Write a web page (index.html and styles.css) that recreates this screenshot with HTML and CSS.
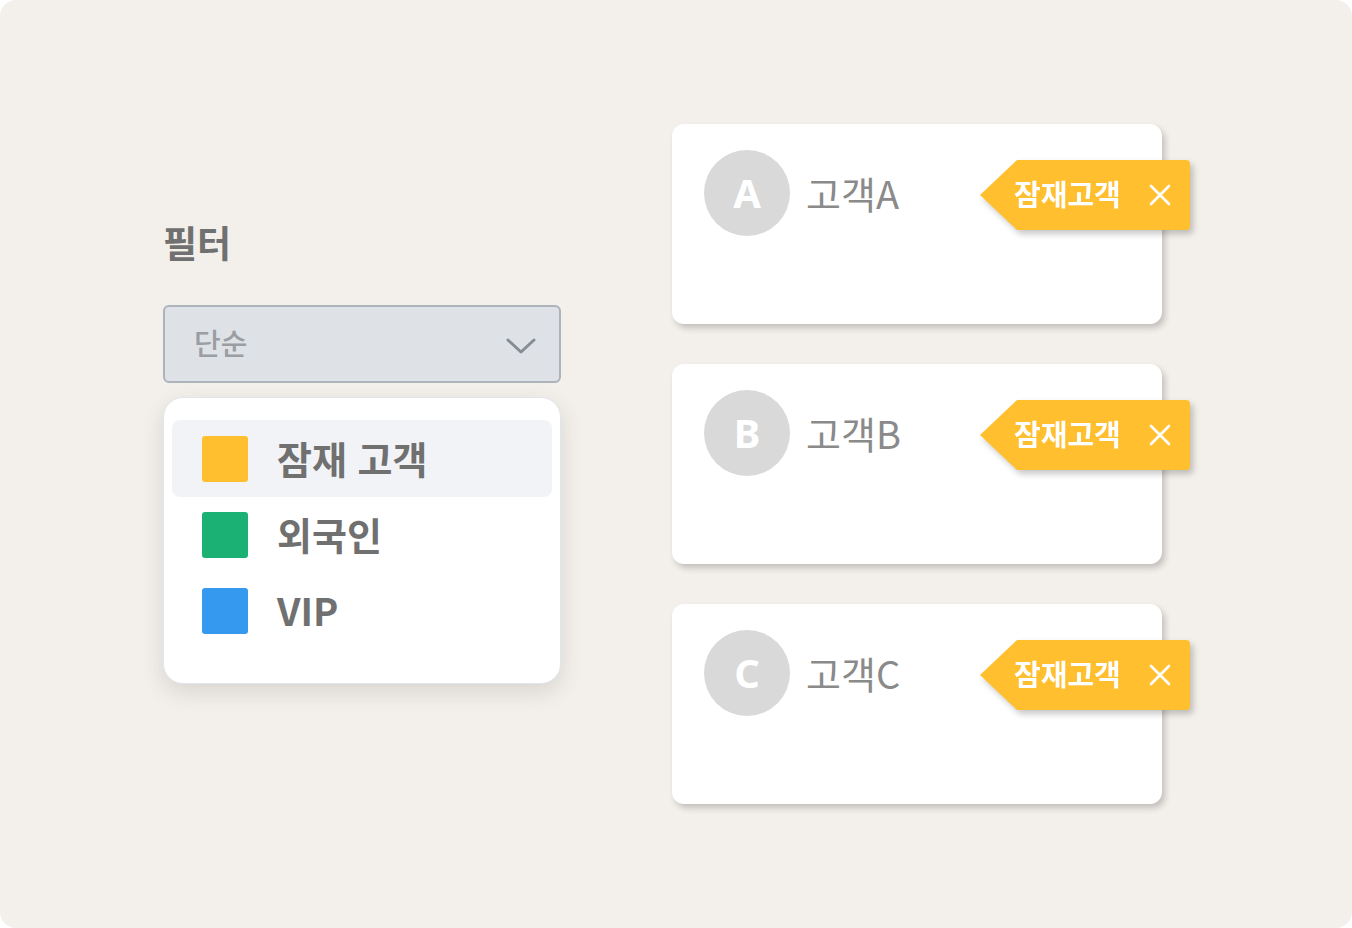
FILE: index.html
```html
<!DOCTYPE html>
<html lang="ko">
<head>
<meta charset="utf-8">
<title>필터</title>
<link rel="stylesheet" href="styles.css">
</head>
<body>
<div class="frame">
  <section class="filter">
    <h1 class="filter-title">필터</h1>
    <div class="select">
      <span class="select-value">단순</span>
      <svg class="chevron" width="30" height="18" viewBox="0 0 30 18"><path d="M2 3 L15 15 L28 3" fill="none" stroke="#858c93" stroke-width="3" stroke-linecap="round" stroke-linejoin="round"/></svg>
    </div>
    <ul class="menu">
      <li class="menu-item active"><span class="swatch yellow"></span><span class="menu-label">잠재 고객</span></li>
      <li class="menu-item"><span class="swatch green"></span><span class="menu-label">외국인</span></li>
      <li class="menu-item"><span class="swatch blue"></span><span class="menu-label">VIP</span></li>
    </ul>
  </section>
  <section class="cards">
    <div class="card">
      <div class="avatar">A</div>
      <div class="name">고객A</div>
      <div class="tag"><div class="tag-body"><span class="tag-text">잠재고객</span><svg class="tag-x" width="22" height="22" viewBox="0 0 22 22"><path d="M2 2 L20 20 M20 2 L2 20" stroke="#fff" stroke-width="2.6" stroke-linecap="round"/></svg></div></div>
    </div>
    <div class="card">
      <div class="avatar">B</div>
      <div class="name">고객B</div>
      <div class="tag"><div class="tag-body"><span class="tag-text">잠재고객</span><svg class="tag-x" width="22" height="22" viewBox="0 0 22 22"><path d="M2 2 L20 20 M20 2 L2 20" stroke="#fff" stroke-width="2.6" stroke-linecap="round"/></svg></div></div>
    </div>
    <div class="card">
      <div class="avatar">C</div>
      <div class="name">고객C</div>
      <div class="tag"><div class="tag-body"><span class="tag-text">잠재고객</span><svg class="tag-x" width="22" height="22" viewBox="0 0 22 22"><path d="M2 2 L20 20 M20 2 L2 20" stroke="#fff" stroke-width="2.6" stroke-linecap="round"/></svg></div></div>
    </div>
  </section>
</div>
</body>
</html>
```

FILE: styles.css
```css
* { box-sizing: border-box; }
html, body { margin: 0; padding: 0; background: #ffffff; }
body {
  font-family: "Noto Sans CJK KR", "Noto Sans", sans-serif;
}
.frame {
  width: 1352px;
  height: 928px;
  background: #f3f0eb;
  border-radius: 16px;
  display: flex;
  align-items: flex-start;
  padding-left: 163px;
  gap: 111px;
  overflow: hidden;
}
.filter {
  width: 398px;
  margin-top: 220px;
  display: flex;
  flex-direction: column;
}
.filter-title {
  margin: 0;
  font-size: 37px;
  line-height: 44px;
  font-weight: 700;
  color: #707070;
}
.select {
  margin-top: 41px;
  height: 78px;
  background: #dee1e5;
  border: 2px solid #abb3bb;
  border-radius: 6px;
  display: flex;
  align-items: center;
  justify-content: space-between;
  padding: 0 23px 0 29px;
}
.select-value {
  font-size: 29px;
  font-weight: 500;
  color: #9a9ea3;
  line-height: 1;
  margin-top: -4px;
}
.chevron { display: block; margin-top: 4px; }
.menu {
  list-style: none;
  margin: 14px 0 0;
  padding: 22px 8px 34px;
  background: #ffffff;
  border: 1px solid #e0e6ee;
  border-radius: 20px;
  box-shadow: 0 8px 22px rgba(60, 50, 40, 0.14);
  display: flex;
  flex-direction: column;
}
.menu-item {
  height: 76px;
  display: flex;
  align-items: center;
  padding-left: 30px;
  gap: 29px;
  border-radius: 8px;
}
.menu-item.active { background: #f2f3f7; height: 77px; }
.swatch {
  width: 46px;
  height: 46px;
  border-radius: 3px;
  flex: none;
}
.swatch.yellow { background: #ffbf2e; }
.swatch.green { background: #1cb174; }
.swatch.blue { background: #3499ef; }
.menu-label {
  font-size: 38px;
  font-weight: 700;
  color: #707070;
  line-height: 1;
  margin-top: -2px;
}
.cards {
  margin-top: 124px;
  display: flex;
  flex-direction: column;
  gap: 40px;
}
.card {
  position: relative;
  width: 490px;
  height: 200px;
  background: #ffffff;
  border-radius: 12px;
  box-shadow: 3px 4px 6px rgba(0, 0, 0, 0.2);
  display: flex;
  align-items: flex-start;
  padding: 26px 0 0 32px;
  gap: 18px;
}
.avatar {
  width: 86px;
  height: 86px;
  border-radius: 50%;
  background: #d9d9d9;
  color: #ffffff;
  font-size: 40px;
  font-weight: 700;
  display: flex;
  align-items: center;
  justify-content: center;
  line-height: 1;
  font-family: "Noto Sans", "Noto Sans CJK KR", sans-serif;
}
.name {
  font-size: 38px;
  font-weight: 400;
  color: #8a8a8a;
  line-height: 86px;
  margin-left: -2px;
}
.tag {
  position: absolute;
  left: 308px;
  top: 36px;
  width: 210px;
  height: 70px;
  display: flex;
  filter: drop-shadow(3px 4px 3px rgba(0, 0, 0, 0.22));
}
.tag::before {
  content: "";
  width: 0;
  height: 0;
  border-top: 35px solid transparent;
  border-bottom: 35px solid transparent;
  border-right: 37px solid #ffbf2f;
  flex: none;
}
.tag-body {
  flex: 1;
  background: #ffbf2f;
  border-radius: 0 4px 4px 0;
  display: flex;
  align-items: center;
  padding-left: 0;
}
.tag-text {
  margin-left: -3px;
  font-size: 29px;
  font-weight: 700;
  color: #ffffff;
  line-height: 1;
  margin-top: -4px;
}
.tag-x { display: block; margin-left: 28px; }
```
